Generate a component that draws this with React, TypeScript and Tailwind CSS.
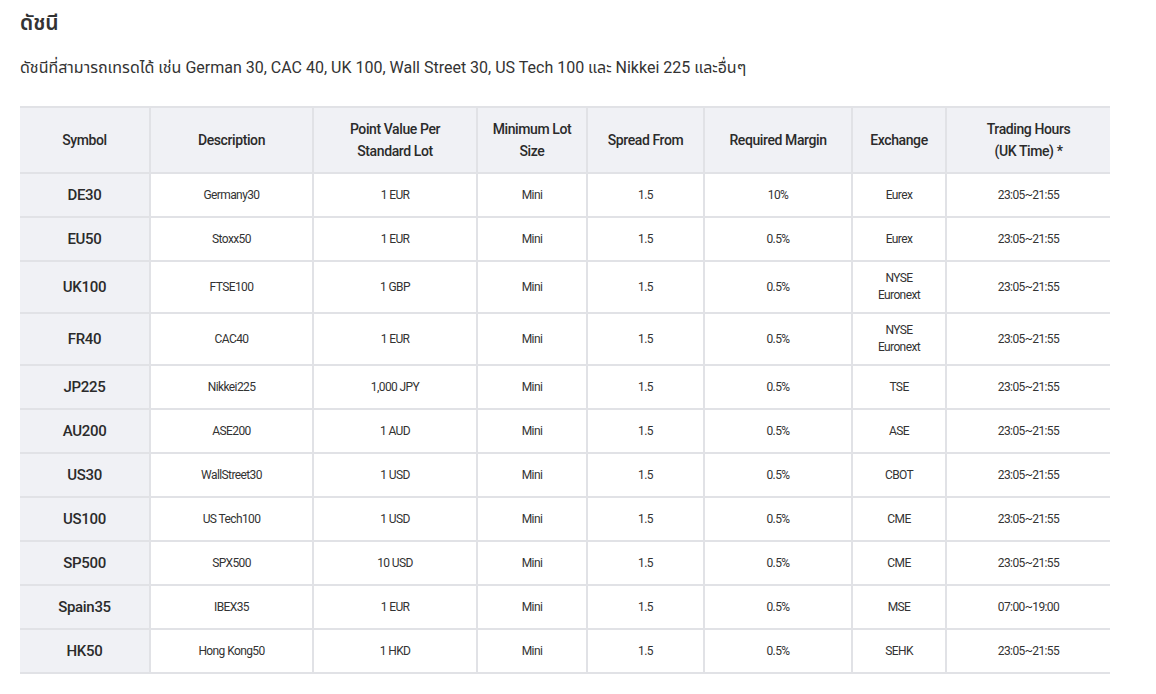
const ROWS: { sym: string; desc: string; point: string; spread: string; margin: string; exch: string[]; hours: string }[] = [
  { sym: 'DE30', desc: 'Germany30', point: '1 EUR', spread: '1.5', margin: '10%', exch: ['Eurex'], hours: '23:05~21:55' },
  { sym: 'EU50', desc: 'Stoxx50', point: '1 EUR', spread: '1.5', margin: '0.5%', exch: ['Eurex'], hours: '23:05~21:55' },
  { sym: 'UK100', desc: 'FTSE100', point: '1 GBP', spread: '1.5', margin: '0.5%', exch: ['NYSE', 'Euronext'], hours: '23:05~21:55' },
  { sym: 'FR40', desc: 'CAC40', point: '1 EUR', spread: '1.5', margin: '0.5%', exch: ['NYSE', 'Euronext'], hours: '23:05~21:55' },
  { sym: 'JP225', desc: 'Nikkei225', point: '1,000 JPY', spread: '1.5', margin: '0.5%', exch: ['TSE'], hours: '23:05~21:55' },
  { sym: 'AU200', desc: 'ASE200', point: '1 AUD', spread: '1.5', margin: '0.5%', exch: ['ASE'], hours: '23:05~21:55' },
  { sym: 'US30', desc: 'WallStreet30', point: '1 USD', spread: '1.5', margin: '0.5%', exch: ['CBOT'], hours: '23:05~21:55' },
  { sym: 'US100', desc: 'US Tech100', point: '1 USD', spread: '1.5', margin: '0.5%', exch: ['CME'], hours: '23:05~21:55' },
  { sym: 'SP500', desc: 'SPX500', point: '10 USD', spread: '1.5', margin: '0.5%', exch: ['CME'], hours: '23:05~21:55' },
  { sym: 'Spain35', desc: 'IBEX35', point: '1 EUR', spread: '1.5', margin: '0.5%', exch: ['MSE'], hours: '07:00~19:00' },
  { sym: 'HK50', desc: 'Hong Kong50', point: '1 HKD', spread: '1.5', margin: '0.5%', exch: ['SEHK'], hours: '23:05~21:55' },
];

const HEADERS: { label: string[]; w: string }[] = [
  { label: ['Symbol'], w: 'w-[130px]' },
  { label: ['Description'], w: 'w-[163px]' },
  { label: ['Point Value Per', 'Standard Lot'], w: 'w-[164px]' },
  { label: ['Minimum Lot', 'Size'], w: 'w-[110px]' },
  { label: ['Spread From'], w: 'w-[117px]' },
  { label: ['Required Margin'], w: 'w-[148px]' },
  { label: ['Exchange'], w: 'w-[94px]' },
  { label: ['Trading Hours', '(UK Time) *'], w: 'w-[164px]' },
];

const cell = 'border-b-2 border-r-2 border-[#e1e2e6] py-2 text-center align-middle';
const small = 'text-[12px] leading-[18px] tracking-[-0.6px] text-[#333]';

export default function App() {
  return (
    <div className="min-h-[694px] bg-white px-5 pt-[9px] text-[#333] [font-family:Roboto,'Noto_Sans_Thai','Noto_Sans',sans-serif]">
      <h1 className="text-[21px] font-semibold leading-[28px]">ดัชนี</h1>
      <p className="mt-[19px] text-[16px] leading-[24px]">
        ดัชนีที่สามารถเทรดได้ เช่น German 30, CAC 40, UK 100, Wall Street 30, US Tech 100 และ Nikkei 225 และอื่นๆ
      </p>

      <table className="mt-[26px] w-[1090px] table-fixed border-collapse">
        <thead>
          <tr className="border-t-2 border-[#e1e2e6] bg-[#f0f1f5]">
            {HEADERS.map((h, i) => (
              <th
                key={i}
                className={`${h.w} h-[66px] border-b-2 border-[#e1e2e6] ${i < HEADERS.length - 1 ? 'border-r-2' : ''} text-center align-middle text-[14px] font-medium leading-[22px] tracking-[-0.4px] text-[#2b2b2b]`}
              >
                {h.label.map(l => (
                  <div key={l}>{l}</div>
                ))}
              </th>
            ))}
          </tr>
        </thead>
        <tbody>
          {ROWS.map(r => (
            <tr key={r.sym} className="h-[44px]">
              <td className={`${cell} bg-[#f0f1f5] text-[15px] font-medium leading-[20px] tracking-[-0.3px] text-[#2b2b2b]`}>{r.sym}</td>
              <td className={`${cell} ${small}`}>{r.desc}</td>
              <td className={`${cell} ${small}`}>{r.point}</td>
              <td className={`${cell} ${small}`}>Mini</td>
              <td className={`${cell} ${small}`}>{r.spread}</td>
              <td className={`${cell} ${small}`}>{r.margin}</td>
              <td className={`${cell} ${small}`}>
                {r.exch.map(e => (
                  <div key={e} className={r.exch.length > 1 ? 'leading-[17px]' : ''}>{e}</div>
                ))}
              </td>
              <td className={`border-b-2 border-[#e1e2e6] py-2 text-center align-middle ${small}`}>{r.hours}</td>
            </tr>
          ))}
        </tbody>
      </table>
    </div>
  );
}
